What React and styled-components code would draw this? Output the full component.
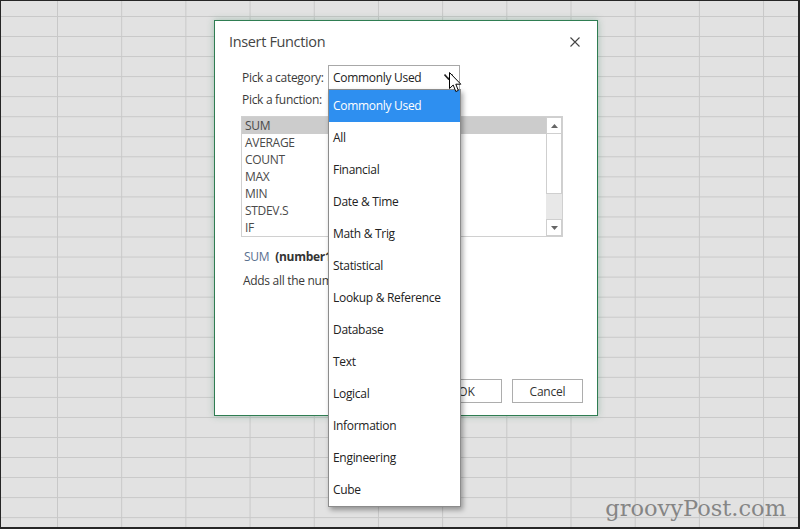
import React from 'react'
import styled, { createGlobalStyle } from 'styled-components'

const GlobalStyle = createGlobalStyle`
  html, body { margin: 0; padding: 0; background: #e2e2e2; }
  * { box-sizing: border-box; }
`

const Screen = styled.div`
  position: relative;
  width: 800px;
  height: 529px;
  overflow: hidden;
  border-top: 1px solid #262626;
  border-left: 1px solid #262626;
  border-right: 2px solid #262626;
  border-bottom: 2px solid #262626;
  background-color: #e2e2e2;
  background-image:
    linear-gradient(to right, #c8c8c8 1px, transparent 1px),
    linear-gradient(to bottom, #c8c8c8 1px, transparent 1px);
  background-size: 64.2px 20.05px;
  background-position: 56px 15px;
  font-family: "Open Sans", "Noto Sans", sans-serif;
`

const Dialog = styled.div`
  position: absolute;
  left: 213px;
  top: 19px;
  width: 384px;
  height: 396px;
  display: flex;
  flex-direction: column;
  background: #fff;
  border: 1px solid #2f7d52;
  box-shadow: 0 0 7px rgba(40, 120, 80, 0.35);
`

const TitleBar = styled.div`
  display: flex;
  align-items: center;
  justify-content: space-between;
  padding: 10px 17px 0 14px;
  height: 32px;
`

const Title = styled.div`
  font-size: 14.5px;
  letter-spacing: -0.35px;
  line-height: 22px;
  color: #454545;
`

const Close = styled.svg`
  width: 10px;
  height: 10px;
`

const Body = styled.div`
  padding: 12px 34px 0 26px;
  display: flex;
  flex-direction: column;
`

const Row = styled.div`
  display: flex;
  align-items: center;
`

const Label = styled.div`
  width: ${p => p.w || 'auto'};
  margin-left: 1px;
  font-size: 12px;
  letter-spacing: -0.3px;
  line-height: 16px;
  color: #3a3a3a;
  margin-top: ${p => p.mt || 0}px;
  white-space: nowrap;
`

const Select = styled.div`
  position: relative;
  width: 132px;
  height: 25px;
  border: 1px solid #a8a8a8;
  background: #fff;
  display: flex;
  align-items: center;
  padding-left: 4px;
  font-size: 12px;
  letter-spacing: -0.3px;
  color: #222;
`

const Chevron = styled.svg`
  position: absolute;
  right: 6px;
  top: 8px;
  width: 9px;
  height: 6px;
`

const ListBox = styled.div`
  margin-top: 8px;
  width: 322px;
  height: 121px;
  border: 1px solid #d0d0d0;
  display: flex;
`

const Items = styled.div`
  flex: 1;
  display: flex;
  flex-direction: column;
`

const Item = styled.div`
  height: 17px;
  line-height: 17px;
  padding-left: 3px;
  font-size: 12px;
  letter-spacing: -0.3px;
  color: #4a4a4a;
  background: ${p => (p.selected ? '#cccccc' : 'transparent')};
`

const ScrollBar = styled.div`
  width: 16px;
  display: flex;
  flex-direction: column;
  background: #e8e8e8;
`

const ScrollBtn = styled.div`
  height: 17px;
  border: 1px solid #cfcfcf;
  background: #fff;
  display: flex;
  align-items: center;
  justify-content: center;
`

const Thumb = styled.div`
  height: 60px;
  border: 1px solid #cfcfcf;
  border-top: none;
  background: #fff;
`

const Track = styled.div`
  flex: 1;
`

const Syntax = styled.div`
  margin-top: 12px;
  margin-left: 3px;
  font-size: 12px;
  letter-spacing: -0.3px;
  line-height: 16px;
  color: #333;
  white-space: nowrap;
`

const FnName = styled.span`
  color: #5a7090;
  margin-right: 6px;
`

const Args = styled.span`
  font-weight: 700;
`

const Description = styled.div`
  margin-top: 8px;
  margin-left: 2px;
  font-size: 12px;
  letter-spacing: -0.3px;
  line-height: 16px;
  color: #3a3a3a;
  white-space: nowrap;
`

const Footer = styled.div`
  margin-top: auto;
  display: flex;
  justify-content: flex-end;
  gap: 10px;
  padding: 0 14px 12px 0;
`

const Button = styled.div`
  width: 71px;
  height: 24px;
  border: 1px solid #adadad;
  background: #fff;
  display: flex;
  align-items: center;
  justify-content: center;
  font-size: 12px;
  letter-spacing: -0.2px;
  color: #333;
`

const Menu = styled.div`
  position: absolute;
  left: 327px;
  top: 88px;
  width: 133px;
  height: 418px;
  background: #fff;
  border: 1px solid #8c8c8c;
  box-shadow: 2px 3px 5px rgba(0, 0, 0, 0.35);
  display: flex;
  flex-direction: column;
`

const MenuItem = styled.div`
  height: 32px;
  line-height: 32px;
  padding-left: 4px;
  font-size: 12px;
  letter-spacing: -0.3px;
  color: ${p => (p.active ? '#fff' : '#222')};
  background: ${p => (p.active ? '#2e8ff0' : '#fff')};
  white-space: nowrap;
`

const Cursor = styled.svg`
  position: absolute;
  left: 448px;
  top: 71px;
  width: 13px;
  height: 21px;
`

const Watermark = styled.div`
  position: absolute;
  right: 12px;
  bottom: 6px;
  font-family: "DejaVu Serif", "Liberation Serif", serif;
  font-size: 22.5px;
  color: #858585;
`

const functions = ['SUM', 'AVERAGE', 'COUNT', 'MAX', 'MIN', 'STDEV.S', 'IF']

const categories = [
  'Commonly Used',
  'All',
  'Financial',
  'Date & Time',
  'Math & Trig',
  'Statistical',
  'Lookup & Reference',
  'Database',
  'Text',
  'Logical',
  'Information',
  'Engineering',
  'Cube',
]

export default function App() {
  return (
    <>
      <GlobalStyle />
      <Screen>
        <Dialog>
          <TitleBar>
            <Title>Insert Function</Title>
            <Close viewBox="0 0 10 10">
              <path d="M0.5 0.5 L9.5 9.5 M9.5 0.5 L0.5 9.5" stroke="#444" strokeWidth="1.1" />
            </Close>
          </TitleBar>
          <Body>
            <Row>
              <Label w="86px">Pick a category:</Label>
              <Select>
                Commonly Used
                <Chevron viewBox="0 0 9 6">
                  <path d="M0.5 0.5 L4.5 5 L8.5 0.5" fill="none" stroke="#222" strokeWidth="1.6" />
                </Chevron>
              </Select>
            </Row>
            <Label mt={2}>Pick a function:</Label>
            <ListBox>
              <Items>
                {functions.map((f, i) => (
                  <Item key={f} selected={i === 0}>{f}</Item>
                ))}
              </Items>
              <ScrollBar>
                <ScrollBtn>
                  <svg width="7" height="4" viewBox="0 0 7 4"><path d="M0 4 L3.5 0 L7 4 Z" fill="#666" /></svg>
                </ScrollBtn>
                <Thumb />
                <Track />
                <ScrollBtn>
                  <svg width="7" height="4" viewBox="0 0 7 4"><path d="M0 0 L3.5 4 L7 0 Z" fill="#666" /></svg>
                </ScrollBtn>
              </ScrollBar>
            </ListBox>
            <Syntax>
              <FnName>SUM</FnName>
              <Args>(number1,number2,...)</Args>
            </Syntax>
            <Description>Adds all the numbers in a range of cells.</Description>
          </Body>
          <Footer>
            <Button>OK</Button>
            <Button>Cancel</Button>
          </Footer>
        </Dialog>

        <Menu>
          {categories.map((c, i) => (
            <MenuItem key={c} active={i === 0}>{c}</MenuItem>
          ))}
        </Menu>

        <Cursor viewBox="0 0 13 21">
          <path
            d="M0.5 0.5 L0.5 16.5 L4.2 13 L6.8 19.5 L9.3 18.4 L6.8 12.2 L11.8 12.2 Z"
            fill="#fff"
            stroke="#000"
            strokeWidth="1"
            strokeLinejoin="round"
          />
        </Cursor>

        <Watermark>groovyPost.com</Watermark>
      </Screen>
    </>
  )
}
